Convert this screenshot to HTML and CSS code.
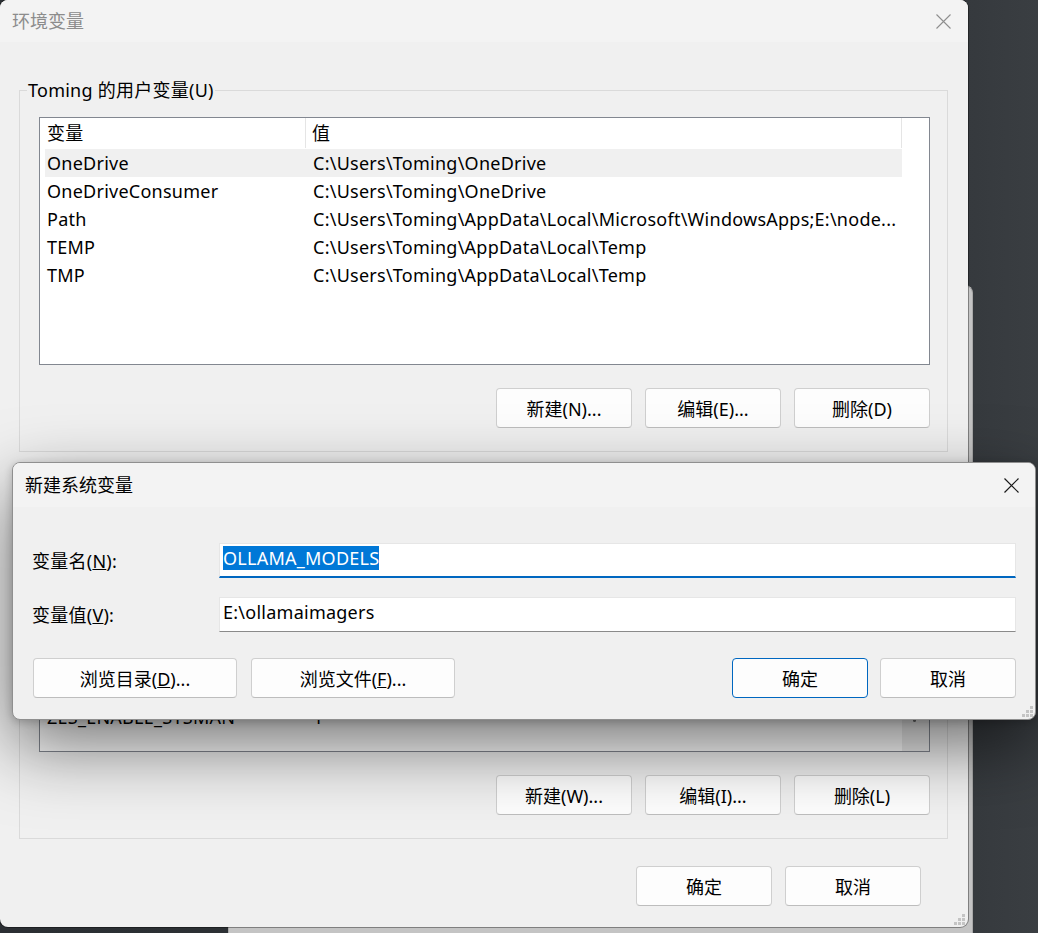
FILE: index.html
```html
<!DOCTYPE html>
<html lang="zh-CN">
<head>
  <meta charset="UTF-8" />
  <title>环境变量</title>
  <link rel="stylesheet" href="styles.css">
</head>
<body>

  <!-- window behind (system properties) -->
  <div class="win-behind"></div>

  <!-- Environment variables window -->
  <div class="win main-win">
    <div class="titlebar">
      <span class="title inactive">环境变量</span>
      <svg class="close" width="15" height="15" viewBox="0 0 15 15">
        <path d="M0.5 0.5 L14.5 14.5 M14.5 0.5 L0.5 14.5" stroke="#8e8e8e" stroke-width="1.1" fill="none"/>
      </svg>
    </div>

    <div class="win-body">
      <fieldset class="group">
        <legend>Toming 的用户变量(U)</legend>
        <div class="listview">
          <div class="lv-header">
            <div class="hcol c1">变量</div>
            <div class="hcol c2">值</div>
          </div>
          <div class="lv-row hot"><span class="c1">OneDrive</span><span class="c2">C:\Users\Toming\OneDrive</span></div>
          <div class="lv-row"><span class="c1">OneDriveConsumer</span><span class="c2">C:\Users\Toming\OneDrive</span></div>
          <div class="lv-row"><span class="c1">Path</span><span class="c2">C:\Users\Toming\AppData\Local\Microsoft\WindowsApps;E:\node...</span></div>
          <div class="lv-row"><span class="c1">TEMP</span><span class="c2">C:\Users\Toming\AppData\Local\Temp</span></div>
          <div class="lv-row"><span class="c1">TMP</span><span class="c2">C:\Users\Toming\AppData\Local\Temp</span></div>
        </div>
        <div class="btn-row">
          <button class="btn">新建(N)...</button>
          <button class="btn">编辑(E)...</button>
          <button class="btn">删除(D)</button>
        </div>
      </fieldset>

      <fieldset class="group sys">
        <legend>系统变量(S)</legend>
        <div class="listview has-scroll">
          <div class="lv-main">
            <div class="lv-header">
              <div class="hcol c1">变量</div>
              <div class="hcol c2">值</div>
            </div>
            <div class="lv-row"><span class="c1">PROCESSOR_REVISION</span><span class="c2">b701</span></div>
            <div class="lv-row"><span class="c1">PSModulePath</span><span class="c2">%ProgramFiles%\WindowsPowerShell\Modules</span></div>
            <div class="lv-row"><span class="c1">TEMP</span><span class="c2">C:\WINDOWS\TEMP</span></div>
            <div class="lv-row"><span class="c1">TMP</span><span class="c2">C:\WINDOWS\TEMP</span></div>
            <div class="lv-row"><span class="c1">USERNAME</span><span class="c2">SYSTEM</span></div>
            <div class="lv-row"><span class="c1">windir</span><span class="c2">%SystemRoot%</span></div>
            <div class="lv-row"><span class="c1">ZES_ENABLE_SYSMAN</span><span class="c2">1</span></div>
          </div>
          <div class="vscroll"><div class="thumb"></div></div>
        </div>
        <div class="btn-row">
          <button class="btn">新建(W)...</button>
          <button class="btn">编辑(I)...</button>
          <button class="btn">删除(L)</button>
        </div>
      </fieldset>

      <div class="btn-row footer">
        <button class="btn">确定</button>
        <button class="btn">取消</button>
      </div>
    </div>

    <svg class="grip" width="11" height="11" viewBox="0 0 11 11">
      <g fill="#c4c4c4">
        <rect x="8" y="0" width="3" height="3"/>
        <rect x="4" y="4" width="3" height="3"/><rect x="8" y="4" width="3" height="3"/>
        <rect x="0" y="8" width="3" height="3"/><rect x="4" y="8" width="3" height="3"/><rect x="8" y="8" width="3" height="3"/>
      </g>
    </svg>
  </div>

  <!-- New system variable dialog -->
  <div class="win dialog">
    <div class="titlebar dlg-title">
      <span class="title">新建系统变量</span>
      <svg class="close" width="15" height="15" viewBox="0 0 15 15">
        <path d="M0.5 0.5 L14.5 14.5 M14.5 0.5 L0.5 14.5" stroke="#1b1b1b" stroke-width="1.2" fill="none"/>
      </svg>
    </div>
    <div class="dlg-body">
      <div class="form">
        <label class="lbl">变量名(<u>N</u>):</label>
        <div class="edit focused"><span class="sel">OLLAMA_MODELS</span></div>
        <label class="lbl">变量值(<u>V</u>):</label>
        <div class="edit">E:\ollamaimagers</div>
      </div>
      <div class="dlg-buttons">
        <button class="btn wide">浏览目录(<u>D</u>)...</button>
        <button class="btn wide">浏览文件(<u>F</u>)...</button>
        <span class="spacer"></span>
        <button class="btn default">确定</button>
        <button class="btn">取消</button>
      </div>
    </div>
    <svg class="grip" width="11" height="11" viewBox="0 0 11 11">
      <g fill="#c4c4c4">
        <rect x="8" y="0" width="3" height="3"/>
        <rect x="4" y="4" width="3" height="3"/><rect x="8" y="4" width="3" height="3"/>
        <rect x="0" y="8" width="3" height="3"/><rect x="4" y="8" width="3" height="3"/><rect x="8" y="8" width="3" height="3"/>
      </g>
    </svg>
  </div>

</body>
</html>
```

FILE: styles.css
```css
/* Desktop */
body {
  margin: 0;
  width: 1038px;
  height: 933px;
  overflow: hidden;
  position: relative;
  background: linear-gradient(90deg, #2b2f33 0%, #2f3337 80%, #363a3e 94%, #3a3e42 100%);
  font-family: "Noto Sans", "Noto Sans CJK SC", sans-serif;
  font-size: 18px;
  letter-spacing: 0.25px;
  color: #000;
}

* {
  box-sizing: border-box;
}

/* Windows */
.win {
  position: absolute;
  background: #f0f0f0;
  border-radius: 8px;
  overflow: hidden;
}

.win-behind {
  position: absolute;
  left: 228px;
  top: 285px;
  width: 745px;
  height: 648px;
  background: #c4c4c4;
  border: 1px solid #a9a9a9;
  border-bottom: 0;
  border-radius: 8px 8px 0 0;
}

.main-win {
  left: 0;
  top: 0;
  width: 968px;
  height: 927px;
  box-shadow: 0 0 0 1px rgba(0,0,0,0.35);
}

.titlebar {
  height: 42px;
  background: #f3f3f3;
  display: flex;
  align-items: center;
  padding-left: 12px;
}

.title {
  flex: 1;
  line-height: 20px;
  letter-spacing: 0;
}

.title.inactive {
  color: #8c8c8c;
}

.titlebar .close {
  margin-right: 17px;
}

.win-body {
  padding: 38px 20px 0 19px;
}

/* Group boxes */
.group {
  margin: 0;
  min-width: 0;
  border: 1px solid #dadada;
  padding: 17px 17px 23px 19px;
}

.group legend {
  font-size: 18px;
  line-height: 20px;
  padding: 0 1px;
  margin-left: -12px;
}

.group.sys {
  margin-top: 14px;
}

/* List views */
.listview {
  height: 248px;
  background: #fff;
  border: 1px solid #828790;
  overflow: hidden;
  line-height: 22px;
}

.has-scroll {
  display: flex;
  height: 249px;
}

.lv-main {
  flex: 1;
  min-width: 0;
}

.lv-header {
  display: flex;
  height: 31px;
  width: 862px;
}

.hcol {
  height: 30px;
  display: flex;
  align-items: center;
  border-right: 1px solid #e5e5e5;
}

.hcol.c1 {
  width: 266px;
  padding-left: 7px;
}

.hcol.c2 {
  width: 596px;
  padding-left: 6px;
}

.lv-row {
  display: flex;
  align-items: center;
  height: 28px;
  width: 857px;
  margin-left: 5px;
  white-space: nowrap;
}

.lv-row.hot {
  background: #f0f0f0;
}

.lv-row .c1 {
  width: 261px;
  padding-left: 2px;
}

.lv-row .c2 {
  flex: 1;
  padding-left: 7px;
  overflow: hidden;
}

.vscroll {
  width: 27px;
  background: #ededed;
  position: relative;
}

.vscroll .thumb {
  position: absolute;
  left: 11px;
  top: 90px;
  width: 3px;
  height: 128px;
  border-radius: 2px;
  background: #707070;
}

/* Buttons */
.btn-row {
  display: flex;
  justify-content: flex-end;
  gap: 13px;
  margin-top: 23px;
}

.btn {
  width: 136px;
  height: 40px;
  font: inherit;
  font-size: 18px;
  color: #000;
  background: #fdfdfd;
  border: 1px solid #cfcfcf;
  border-bottom-color: #bdbdbd;
  border-radius: 4px;
  padding: 0;
}

.footer {
  margin-top: 27px;
  margin-right: 27px;
}

.grip {
  position: absolute;
  right: 3px;
  bottom: 2px;
}

/* Dialog */
.dialog {
  left: 12px;
  top: 462px;
  width: 1024px;
  height: 258px;
  border: 1px solid #8f8f8f;
  box-shadow: 0 26px 70px rgba(0,0,0,0.55), 0 2px 8px rgba(0,0,0,0.2);
}

.dlg-title {
  height: 44px;
}

.dlg-title .close {
  margin-right: 16px;
}

.dlg-body {
  padding: 36px 19px 0 19px;
}

.form {
  display: grid;
  grid-template-columns: 187px 1fr;
  row-gap: 19px;
  align-items: center;
}

.lbl {
  line-height: 20px;
}

.edit {
  height: 35px;
  background: #fff;
  border: 1px solid #e6e6e6;
  border-bottom: 1px solid #8a8a8a;
  padding: 0 0 5px 3px;
  display: flex;
  align-items: center;
  line-height: 24px;
}

.edit.focused {
  border-bottom: 2px solid #0067c0;
  padding-bottom: 4px;
}

.sel {
  background: #0078d7;
  color: #fff;
}

.dlg-buttons {
  display: flex;
  gap: 12px;
  margin-top: 26px;
  padding-left: 1px;
}

.btn.wide {
  width: 204px;
}

.btn.wide + .btn.wide {
  margin-left: 2px;
}

.spacer {
  flex: 1;
}

.btn.default {
  border: 1px solid #0067c0;
}

.dialog .grip {
  right: 2px;
  bottom: 2px;
}
```
